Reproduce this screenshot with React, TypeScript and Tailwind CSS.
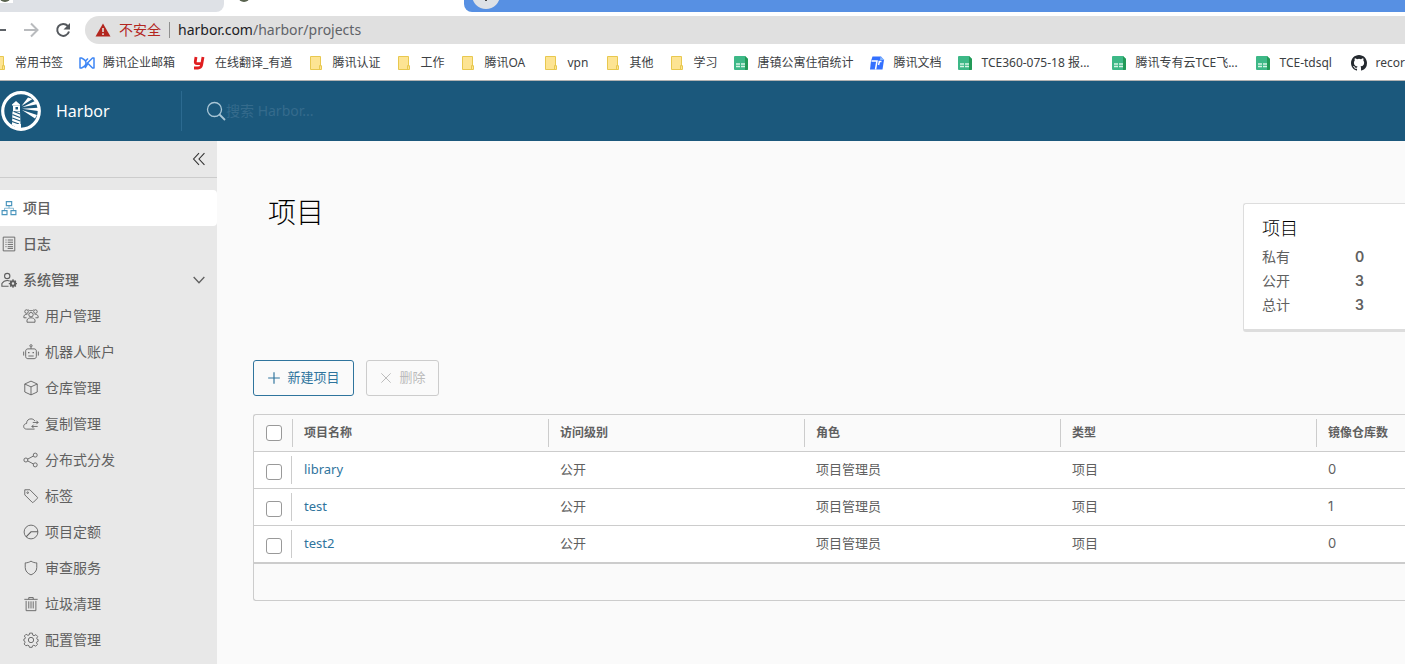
import type { ReactNode } from 'react'
import clsx from 'clsx'

const Icon = ({ children, className = 'size-4' }: { children: ReactNode; className?: string }) => (
    <svg viewBox="0 0 36 36" fill="none" stroke="currentColor" strokeWidth="2" className={clsx('shrink-0', className)} aria-hidden="true">
        {children}
    </svg>
)

const icons = {
    project: (
        <g strokeWidth="2.6">
            <path d="M12 3.500h12v9H12zM2.500 24h11v9h-11zM22.500 24h11v9h-11z" />
            <path d="M8 23v-4.500h20V23M18 13v5" strokeWidth="1.500" />
        </g>
    ),
    log: (
        <>
            <path d="M5 2.500h26v31H5z" />
            <path d="M10 9h2.500M10 14h2.500M10 19h2.500M10 24h2.500M15 9h12M15 14h12M15 19h12M15 24h12M15 28h12" />
        </>
    ),
    admin: (
        <>
            <circle cx="14" cy="9" r="6" strokeWidth="2.500" />
            <path d="M17 32H2v-6c3-5 7.500-7 12-7 2 0 4 .4 5.500 1.200" strokeWidth="2.500" />
            <circle cx="27" cy="26" r="5" strokeWidth="4.500" />
            <path d="M27 16.500v4M27 31.500v4M17.500 26h4M32.500 26h3.500M20.500 19.500l3 3M30.500 29.500l3 3M33.500 19.500l-3 3M23.500 29.500l-3 3" strokeWidth="3" />
        </>
    ),
    users: (
        <>
            <circle cx="18" cy="15" r="5" />
            <circle cx="8" cy="8" r="4" />
            <circle cx="28" cy="8" r="4" />
            <path d="M9 32v-5c1-3 5-5 9-5s8 2 9 5v5zM2 22v-4c1-2.500 4-4 8-4M34 22v-4c-1-2.500-4-4-8-4M2 22h6M34 22h-6M12 4c3 3 9 3 12 0" />
        </>
    ),
    robot: (
        <>
            <circle cx="18" cy="4" r="2.500" />
            <path d="M18 7v4M11 11h14c3 0 5 2 5 5v12c0 3-2 5-5 5H11c-3 0-5-2-5-5V16c0-3 2-5 5-5zM1.500 17v9M34.500 17v9M12 27h12" />
            <path d="M13 18v3M23 18v3" strokeWidth="3" />
        </>
    ),
    box: <path d="M18 2.500l14 6.500v18l-14 6.500L4 27V9zM4 9l14 6.500L32 9M18 15.500v18" />,
    cloud: (
        <path d="M26 29.500H8c-4 0-6.500-2.700-6.500-6 0-3.500 2.500-6.500 6.500-6.500C8 10 12.500 6.500 18 6.500c4 0 6.500 1.500 8.500 4.500M22 14.500h12M30 10.500l4 4-4 4M33 23.500H20M24 19.500l-4 4 4 4" />
    ),
    share: (
        <>
            <circle cx="27.500" cy="7" r="4.500" />
            <circle cx="27.500" cy="29" r="4.500" />
            <circle cx="6.500" cy="18" r="4.500" />
            <path d="M10.500 16l13-7M10.500 20l13 7" />
        </>
    ),
    tag: (
        <>
            <path d="M4 4h11.500L32 20.500c1 1 1 2 0 3L23.500 32c-1 1-2 1-3 0L4 15.500z" />
            <circle cx="10.500" cy="10.500" r="1.800" />
        </>
    ),
    quota: (
        <>
            <circle cx="18" cy="18" r="15.500" />
            <path d="M7 29l11-11.500h15.500" strokeWidth="2.500" />
        </>
    ),
    shield: <path d="M18 2.500c4 2.700 8.500 4 13 4v10.500c0 8-5.500 13.500-13 16.500C10.500 30.500 5 25 5 17V6.500c4.500 0 9-1.300 13-4z" />,
    trash: <path d="M3 7.500h30M13 7V3.500h10V7M7 11v22h22V11M13 12v16M18 12v16M23 12v16" />,
    cog: (
        <>
            <circle cx="18" cy="18" r="6" />
            <path d="M15 2.500h6l1 4.500 3 1.300 4-2.300 4 4-2.200 4 1.200 2.500 2 .5v4l-3.200 1.500-.5 1.500 2.200 4-4 4-4-2.300-3 1.300-1 3.500h-6l-1-3.500-3-1.300L6.500 31l-4-4 2.200-4-.7-2-2-1v-4l3-1.500.5-1.500L3 9l4-4 4 2.500 3-1z" strokeLinejoin="round" />
        </>
    ),
}

const adminItems = [
    { label: '用户管理', icon: icons.users },
    { label: '机器人账户', icon: icons.robot },
    { label: '仓库管理', icon: icons.box },
    { label: '复制管理', icon: icons.cloud },
    { label: '分布式分发', icon: icons.share },
    { label: '标签', icon: icons.tag },
    { label: '项目定额', icon: icons.quota },
    { label: '审查服务', icon: icons.shield },
    { label: '垃圾清理', icon: icons.trash },
    { label: '配置管理', icon: icons.cog },
]

const FolderIcon = () => (
    <svg viewBox="0 0 16 16" className="size-4 shrink-0" aria-hidden="true">
        <path d="M2.500 1.500h10v9.500h1v3.500h-11z" fill="#fde493" stroke="#e8c84f" />
        <path d="M11.500 14v-3.500h2" fill="none" stroke="#e8c84f" />
    </svg>
)

const SheetIcon = () => (
    <svg viewBox="0 0 16 16" className="size-4 shrink-0" aria-hidden="true">
        <path d="M1 2Q1 1 2 1h10l3 3v10q0 1-1 1H2q-1 0-1-1z" fill="#3db887" />
        <path d="M12 1l3 3v10q0 1-1 1h-2z" fill="#239a57" />
        <path d="M3 9h4M8 9h4M3 11.500h4M8 11.500h4" stroke="#d8f5e6" strokeWidth="1.300" />
    </svg>
)

const MailIcon = () => (
    <svg viewBox="0 0 16 16" className="size-4 shrink-0" fill="none" stroke="#3f87f5" strokeWidth="1.500" aria-hidden="true">
        <path d="M1 3h1.500Q7 5 7 8T2.500 13H1zM15 3h-1.500L8.500 8l5 5H15zM9 3.500L6.500 6M6 13l2.500-4" strokeLinejoin="round" />
    </svg>
)

const YoudaoIcon = () => (
    <svg viewBox="0 0 16 16" className="size-4 shrink-0" fill="none" stroke="#e01e20" strokeWidth="2.800" aria-hidden="true">
        <path d="M5 2L4.300 6.500Q4 8.700 6 8.700h4M12 2l-1.400 8Q10 13 7 13H3" />
    </svg>
)

const DocsIcon = () => (
    <svg viewBox="0 0 16 16" className="size-4 shrink-0" aria-hidden="true">
        <path d="M3.500 1.500H12L15 5l-1.500 9.500H1L2 6z" fill="#3370ff" />
        <path d="M11.500 1.500L15.500 5H11z" fill="#85b7ff" />
        <path d="M2.500 6h5.500L6.500 14.500M12.500 6.500H9.500M10.500 6.500L9.500 10" stroke="#fff" strokeWidth="1.500" fill="none" />
    </svg>
)

const GithubIcon = () => (
    <svg viewBox="0 0 16 16" className="size-4 shrink-0" fill="#24292f" aria-hidden="true">
        <path d="M8 0C3.580 0 0 3.580 0 8c0 3.540 2.290 6.530 5.470 7.590.4.070.55-.17.55-.38v-1.490c-2.010.37-2.530-.49-2.690-.94-.09-.23-.48-.94-.82-1.130-.28-.15-.68-.52-.01-.53.63-.01 1.080.58 1.230.82.72 1.210 1.870.87 2.330.66.07-.52.28-.87.51-1.070-1.780-.2-3.640-.89-3.640-3.950 0-.87.31-1.590.82-2.150-.08-.2-.36-1.020.08-2.120 0 0 .67-.21 2.200.82a7.420 7.420 0 0 1 4 0c1.530-1.040 2.200-.82 2.200-.82.44 1.100.16 1.920.08 2.120.51.56.82 1.270.82 2.150 0 3.070-1.870 3.750-3.650 3.950.29.25.54.73.54 1.480v2.200c0 .21.15.46.55.38A8.010 8.010 0 0 0 16 8c0-4.420-3.580-8-8-8z" />
    </svg>
)

const bookmarks = [
    { label: '常用书签', icon: <FolderIcon /> },
    { label: '腾讯企业邮箱', icon: <MailIcon /> },
    { label: '在线翻译_有道', icon: <YoudaoIcon /> },
    { label: '腾讯认证', icon: <FolderIcon /> },
    { label: '工作', icon: <FolderIcon /> },
    { label: '腾讯OA', icon: <FolderIcon />, width: 'min-w-[43px]' },
    { label: 'vpn', icon: <FolderIcon />, width: 'min-w-[22px]' },
    { label: '其他', icon: <FolderIcon /> },
    { label: '学习', icon: <FolderIcon /> },
    { label: '唐镇公寓住宿统计', icon: <SheetIcon /> },
    { label: '腾讯文档', icon: <DocsIcon /> },
    { label: 'TCE360-075-18 报...', icon: <SheetIcon />, width: 'min-w-[114px]' },
    { label: '腾讯专有云TCE飞...', icon: <SheetIcon />, width: 'min-w-[104px]' },
    { label: 'TCE-tdsql', icon: <SheetIcon />, width: 'min-w-[56px]' },
    { label: 'recor', icon: <GithubIcon /> },
]

const projects = [
    { name: 'library', repos: 0 },
    { name: 'test', repos: 1 },
    { name: 'test2', repos: 0 },
]

const summary = [
    { label: '私有', value: 0 },
    { label: '公开', value: 3 },
    { label: '总计', value: 3 },
]

const HarborLogo = () => (
    <svg viewBox="0 0 40 40" className="size-10 shrink-0" fill="#fff" aria-hidden="true">
        <circle cx="20" cy="20" r="18.300" fill="none" stroke="#fff" strokeWidth="3.200" />
        <path d="M15 10l4 3.500v1h-8v-1z" />
        <path d="M12 14.500h7V20h-7z" />
        <path d="M14.500 16h2.500v2.500h-2.500z" fill="#1b587c" />
        <path d="M11.500 20.500h7.500L19.500 33H11z" />
        <path d="M11.500 23.500l7.500 3M11.300 27l8 3M11 30.500l7 2.500M13 20.500l6 2.500" stroke="#1b587c" strokeWidth="1.200" />
        <path d="M10 33h10v4.500Q14 37 10 33z" />
        <path d="M20.500 15L27 6.500l4.500 1.500zM21 16.300L34 10l2 3.200zM21 17.700l16-1v3.300zM21 19l15 5-2 3.500z" />
    </svg>
)

const checkboxClass = 'block size-4 appearance-none rounded-[3px] border border-[#999] bg-white checked:bg-[#0072a3]'

function Browser() {
    return (
        <div className="border-b border-[#b3b3b3] bg-white">
            <div className="flex h-3 overflow-hidden">
                <div className="w-56 shrink-0 rounded-br-lg bg-[#dee1e6]">
                    <div className="h-[3px] w-[13px] bg-white">
                        <svg viewBox="0 0 13 3" className="block h-[3px] w-[13px]" aria-hidden="true">
                            <circle cx="5" cy="-4" r="6" fill="#59634f" />
                        </svg>
                    </div>
                </div>
                <div className="w-60 shrink-0 pl-3.5">
                    <svg viewBox="0 0 13 3" className="block h-[3px] w-[13px]" aria-hidden="true">
                        <circle cx="6" cy="-4" r="6" fill="#59634f" />
                    </svg>
                </div>
                <div className="grow rounded-bl-lg bg-[#5790e3] pl-2">
                    <svg viewBox="0 0 28 12" className="block h-3 w-7" aria-hidden="true">
                        <circle cx="14" cy="-5" r="14" fill="#dee1e6" />
                        <path d="M14-6v7" stroke="#444" strokeWidth="2" />
                    </svg>
                </div>
            </div>
            <div className="mt-1 flex h-7 items-center">
                <button aria-label="返回" className="-ml-2.5">
                    <svg viewBox="0 0 16 16" className="size-4" fill="none" stroke="#5f6368" strokeWidth="2" aria-hidden="true">
                        <path d="M16 8H2M8 1L1 8l7 7" />
                    </svg>
                </button>
                <button aria-label="前进" className="ml-[17px]">
                    <svg viewBox="0 0 16 16" className="size-4" fill="none" stroke="#b9bbbe" strokeWidth="2" aria-hidden="true">
                        <path d="M1 8h13M8 1.500L14.500 8 8 14.500" />
                    </svg>
                </button>
                <button aria-label="重新加载" className="ml-4">
                    <svg viewBox="0 0 16 16" className="size-4" fill="none" stroke="#54585d" strokeWidth="2" aria-hidden="true">
                        <path d="M12.800 4A6 6 0 1 0 14 9.500" />
                        <path d="M15 1v6.500H8.500z" fill="#54585d" stroke="none" />
                    </svg>
                </button>
                <div className="ml-3.5 flex h-7 grow items-center rounded-l-full bg-[#e0e0e0] pl-2.5 text-sm">
                    <svg viewBox="0 0 16 16" className="size-4" aria-hidden="true">
                        <path d="M8 1.500L15.500 14.500H.5z" fill="#b3261e" />
                        <path d="M8 6v4M8 11.200v1.800" stroke="#e0e0e0" strokeWidth="1.600" />
                    </svg>
                    <span className="ml-2 text-[#b3261e]">不安全</span>
                    <span className="mx-2 h-4 w-px bg-[#8f8f8f]" />
                    <span className="text-[#5f6368]">
                        <span className="text-[#202124]">harbor.com</span>/harbor/projects
                    </span>
                </div>
            </div>
            <nav className="-ml-[9px] flex h-9 items-center gap-4 overflow-hidden pt-0.5 text-xs text-[#3c4043]">
                {bookmarks.map((b) => (
                    <a key={b.label} href="#" className="flex shrink-0 items-center gap-2 whitespace-nowrap">
                        {b.icon}
                        <span className={b.width}>{b.label}</span>
                    </a>
                ))}
            </nav>
        </div>
    )
}

function Sidebar() {
    return (
        <aside className="w-[217px] shrink-0 bg-[#e8e8e8] text-sm text-[#606060]">
            <div className="flex h-[37px] items-center justify-end border-b border-[#ccc] pr-[11px]">
                <button aria-label="收起" className="text-[#333]">
                    <Icon className="size-3.5">
                        <path d="M18 3L4 18l14 15M32 3L18 18l14 15" strokeWidth="2.800" />
                    </Icon>
                </button>
            </div>
            <nav className="pt-3">
                <a href="#" className="flex h-9 items-center gap-1.5 rounded-r-[4px] bg-white pl-px font-medium">
                    <Icon className="size-4 text-[#4a95bd]">{icons.project}</Icon>
                    项目
                </a>
                <a href="#" className="flex h-9 items-center gap-1.5 pl-px font-medium">
                    <Icon>{icons.log}</Icon>
                    日志
                </a>
                <button className="flex h-9 w-full items-center gap-1.5 pr-3 pl-px font-medium">
                    <Icon>{icons.admin}</Icon>
                    系统管理
                    <Icon className="ml-auto size-3">
                        <path d="M2 9l16 17L34 9" strokeWidth="4" />
                    </Icon>
                </button>
                {adminItems.map((item) => (
                    <a key={item.label} href="#" className="flex h-9 items-center gap-1.5 pl-[23px]">
                        <Icon>{item.icon}</Icon>
                        {item.label}
                    </a>
                ))}
            </nav>
        </aside>
    )
}

function ProjectTable() {
    return (
        <div className="mt-[18px] rounded-l-[3px] border border-r-0 border-[#ccc]">
            <table className="w-full table-fixed border-collapse text-left text-[13px] text-[#606060]">
                <colgroup>
                    <col className="w-[38px]" />
                    <col className="w-64" />
                    <col className="w-64" />
                    <col className="w-64" />
                    <col className="w-64" />
                    <col />
                </colgroup>
                <thead>
                    <tr className="h-9 border-b border-[#ccc] text-xs">
                        <th className="pl-3">
                            <input type="checkbox" aria-label="全选" className={checkboxClass} />
                        </th>
                        {['项目名称', '访问级别', '角色', '类型', '镜像仓库数'].map((h) => (
                            <th key={h} className="whitespace-nowrap">
                                <div className="flex h-7 items-center border-l border-[#ccc] pl-[11px]">{h}</div>
                            </th>
                        ))}
                    </tr>
                </thead>
                <tbody>
                    {projects.map((p) => (
                        <tr key={p.name} className="h-[37px] border-b border-[#ccc] bg-white">
                            <td>
                                <div className="flex h-7 items-end border-r border-[#ccc] pb-1 pl-3">
                                    <input type="checkbox" aria-label={p.name} className={checkboxClass} />
                                </div>
                            </td>
                            <td className="pl-3">
                                <a href="#" className="text-[#2f749d]">{p.name}</a>
                            </td>
                            <td className="pl-3">公开</td>
                            <td className="pl-3">项目管理员</td>
                            <td className="pl-3">项目</td>
                            <td className="pl-3 font-['Inter']">{p.repos}</td>
                        </tr>
                    ))}
                </tbody>
            </table>
            <div className="h-[37px] border-t border-[#ccc]" />
        </div>
    )
}

export default function App() {
    return (
        <div className="flex min-h-screen flex-col overflow-hidden bg-[#fafafa] font-['Noto_Sans','Noto_Sans_CJK_SC',sans-serif]">
            <Browser />
            <header className="flex h-[60px] items-center bg-[#1b587c] pl-px text-white">
                <HarborLogo />
                <a href="#" className="ml-[15px] w-[125px] text-base">Harbor</a>
                <label className="flex h-10 grow items-center border-l border-[#2c6a90] pl-6">
                    <svg viewBox="0 0 20 20" className="size-5" fill="none" stroke="#a9c6d6" strokeWidth="1.300" aria-hidden="true">
                        <circle cx="8.500" cy="8.500" r="7" />
                        <path d="M13.500 13.500l5.500 5.500" strokeWidth="1.800" />
                    </svg>
                    <input type="text" aria-label="搜索" placeholder="搜索 Harbor..." className="grow bg-transparent text-sm outline-none placeholder:text-[#356b8c]" />
                </label>
            </header>
            <div className="flex grow">
                <Sidebar />
                <main className="min-w-0 grow pl-9">
                    <div className="flex items-start justify-between pt-[53px]">
                        <h1 className="pl-[15px] text-[28px] leading-9 font-light text-black">项目</h1>
                        <section className="mt-[9px] w-[162px] rounded-l-[3px] border border-r-0 border-b-[3px] border-[#ddd] bg-white py-3 pl-[18px]">
                            <h2 className="text-lg leading-6 font-light text-black">项目</h2>
                            <dl className="mt-[5px] grid grid-cols-[93px_1fr] text-sm leading-6 text-[#606060]">
                                {summary.map((s) => (
                                    <div key={s.label} className="contents">
                                        <dt>{s.label}</dt>
                                        <dd className="font-['Inter'] font-semibold">{s.value}</dd>
                                    </div>
                                ))}
                            </dl>
                        </section>
                    </div>
                    <div className="mt-7 flex gap-3 text-[13px]">
                        <button className="flex h-9 w-[101px] items-center justify-center gap-1.5 rounded-[3px] border border-[#2f749d] text-[#2f749d]">
                            <Icon className="size-3.5">
                                <path d="M18 3v30M3 18h30" strokeWidth="3" />
                            </Icon>
                            新建项目
                        </button>
                        <button disabled className="flex h-9 w-[73px] items-center justify-center gap-1.5 rounded-[3px] border border-[#ccc] text-[#bbb]">
                            <Icon className="size-3.5">
                                <path d="M6 6l24 24M30 6L6 30" strokeWidth="2.500" />
                            </Icon>
                            删除
                        </button>
                    </div>
                    <ProjectTable />
                </main>
            </div>
        </div>
    )
}
